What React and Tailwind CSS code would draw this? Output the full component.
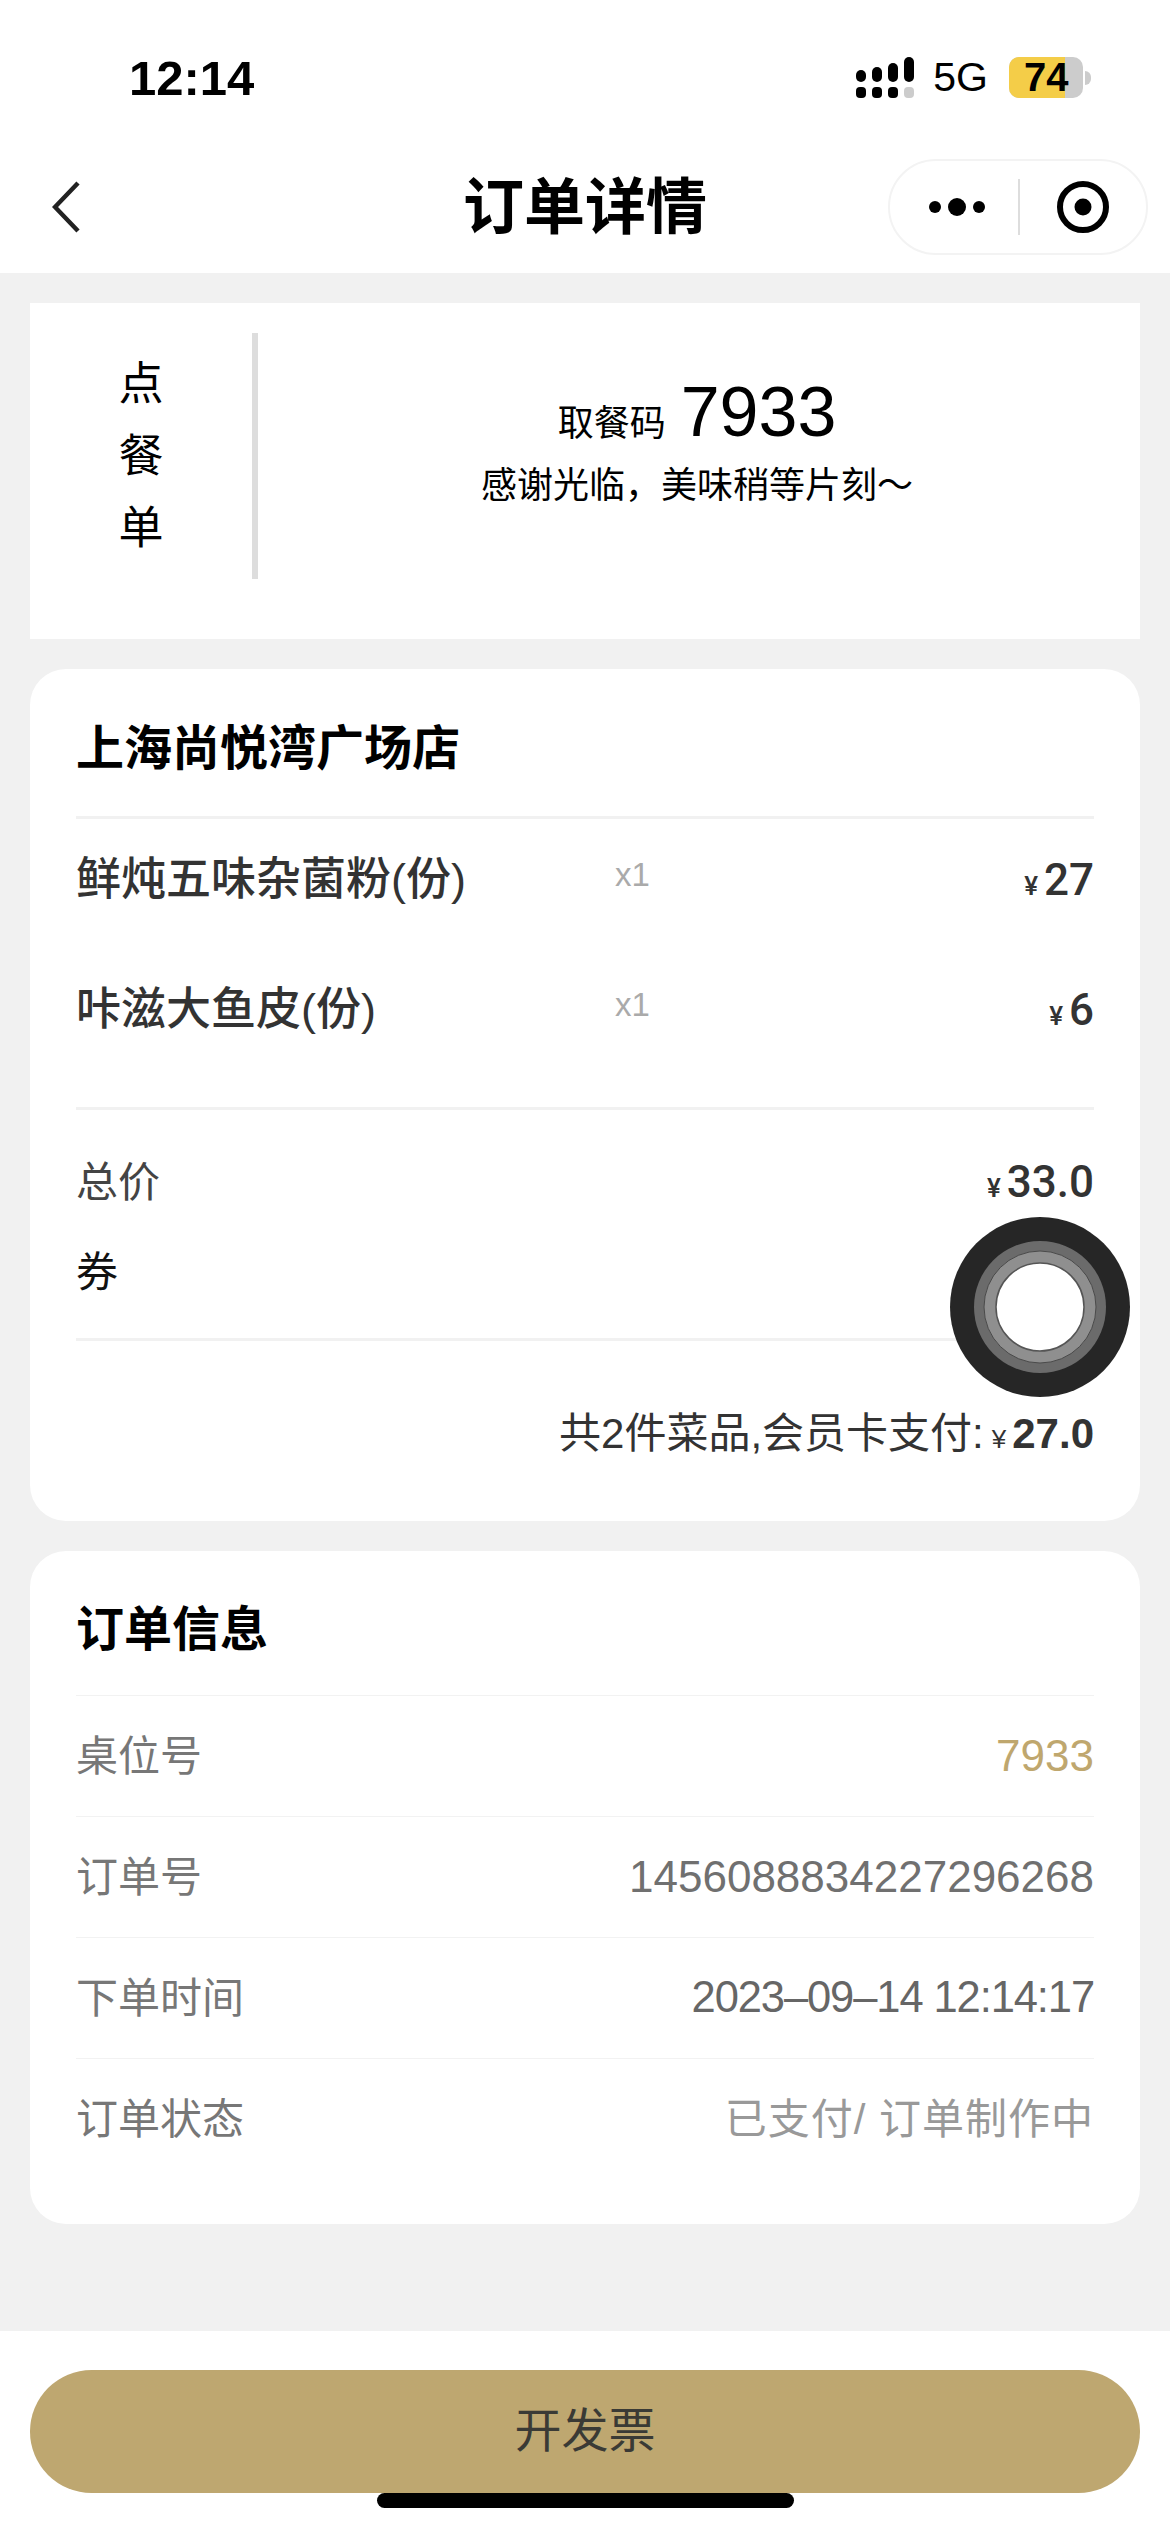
const sans = "font-['Liberation_Sans','Noto_Sans_CJK_SC',sans-serif]";

const Price = ({ value, bold }) => (
  <span className={`flex items-baseline gap-[6px] text-[#333] ${bold ? "font-bold text-[42px]" : "font-['Roboto',sans-serif] font-medium text-[44px]"}`}>
    <span className="text-[26px] font-medium">¥</span>
    <span>{value}</span>
  </span>
);

const StatusBar = () => (
  <div className="h-[140px] flex items-start pt-[50px] pl-[129px] pr-[79px] justify-between">
    <span className="text-[49px] leading-[56px] font-bold text-black">12:14</span>
    <div className="flex items-center gap-[19px] pt-[7px]">
      <svg width="58" height="41" viewBox="0 0 58 41">
        <rect x="0" y="13" width="10" height="12" rx="5" fill="#000" />
        <rect x="16" y="10" width="10" height="15" rx="5" fill="#000" />
        <rect x="32" y="6" width="10" height="19" rx="5" fill="#000" />
        <rect x="48" y="0" width="10" height="25" rx="5" fill="#000" />
        <rect x="0" y="30" width="10" height="11" rx="4" fill="#000" />
        <rect x="16" y="30" width="10" height="11" rx="4" fill="#000" />
        <rect x="32" y="30" width="10" height="11" rx="4" fill="#000" />
        <rect x="48" y="30" width="10" height="11" rx="4" fill="#ccc" />
      </svg>
      <span className="text-[41px] leading-[41px] text-black mr-[2px]">5G</span>
      <div className="flex items-center">
        <div className="relative w-[74px] h-[41px] rounded-[10px] bg-[#ccc]">
          <div className="w-[56px] h-full rounded-l-[10px] bg-[#f4cd48]" />
          <span className="absolute left-[15px] top-0 text-[40px] leading-[41px] font-bold text-black">74</span>
        </div>
        <div className="w-[6px] h-[14px] ml-[2px] rounded-r-full bg-[#ccc]" />
      </div>
    </div>
  </div>
);

const NavBar = () => (
  <div className="relative h-[133px] flex items-center justify-between pl-[52px] pr-[22px]">
    <svg width="28" height="52" viewBox="0 0 28 52">
      <path d="M26 2 L3 26 L26 50" fill="none" stroke="#222" strokeWidth="4.5" />
    </svg>
    <h1 className="absolute left-0 right-0 top-[2px] leading-[133px] text-center text-[61px] font-bold text-black pointer-events-none">订单详情</h1>
    <div className="w-[260px] h-[96px] rounded-full border-2 border-[#f3f3f3] flex items-center">
      <svg width="56" height="20" viewBox="0 0 56 20" className="ml-[39px]">
        <circle cx="6" cy="10" r="6" fill="#000" />
        <circle cx="28" cy="10" r="9" fill="#000" />
        <circle cx="50" cy="10" r="6" fill="#000" />
      </svg>
      <div className="w-[2px] h-[56px] bg-[#ddd] ml-[33px]" />
      <svg width="54" height="54" viewBox="0 0 54 54" className="ml-[36px]">
        <circle cx="27" cy="27" r="23" fill="none" stroke="#000" strokeWidth="6" />
        <circle cx="27" cy="27" r="8.5" fill="#000" />
      </svg>
    </div>
  </div>
);

const PickupCard = () => (
  <section className="h-[336px] bg-white flex pt-[30px]">
    <div className="w-[222px] h-[246px] pt-[2px] flex flex-col items-center justify-center text-[45px] leading-[72px] text-black">
      <span>点</span>
      <span>餐</span>
      <span>单</span>
    </div>
    <div className="w-[6px] h-[246px] bg-[#ddd]" />
    <div className="flex-1 flex flex-col items-center pt-[39px] pr-[4px] text-black">
      <div className="flex items-baseline gap-[15px]">
        <span className="text-[36px]">取餐码</span>
        <span className="text-[70px] leading-[80px]">7933</span>
      </div>
      <p className="text-[36px] leading-[50px] mt-[9px]">感谢光临，美味稍等片刻～</p>
    </div>
  </section>
);

const ItemRow = ({ name, price }) => (
  <div className="h-[122px] flex items-center">
    <span className="w-[539px] text-[45px] font-medium text-[#333]">{name}</span>
    <span className="text-[33px] text-[#aaa] -mt-[10px]">x1</span>
    <span className="ml-auto"><Price value={price} /></span>
  </div>
);

const OrderCard = () => (
  <section className="relative h-[852px] bg-white rounded-[36px] px-[46px]">
    <h2 className="h-[150px] pt-[46px] leading-[68px] text-[48px] font-bold text-black border-b-[3px] border-[#f1f1f1]">上海尚悦湾广场店</h2>
    <div className="h-[291px] flex flex-col gap-2 border-b-[3px] border-[#f1f1f1]">
      <ItemRow name="鲜炖五味杂菌粉(份)" price="27" />
      <ItemRow name="咔滋大鱼皮(份)" price="6" />
    </div>
    <div className="h-[231px] pt-[36px] border-b-[3px] border-[#f1f1f1] text-[42px]">
      <div className="h-[72px] flex items-center justify-between text-[#444]">
        <span>总价</span>
        <Price value="33.0" />
      </div>
      <div className="h-[72px] mt-[18px] flex items-center text-[#111]">券</div>
    </div>
    <div className="h-[180px] pt-[61px] flex justify-end items-start">
      <div className="flex items-baseline gap-[8px] text-[#333]">
        <span className="text-[42px]">共2件菜品,会员卡支付:</span>
        <Price value="27.0" bold />
      </div>
    </div>
  </section>
);

const InfoRow = ({ label, value, className }) => (
  <div className="h-[121px] flex items-center justify-between border-t border-[#f2f2f2] text-[42px] text-[#777]">
    <span>{label}</span>
    <span className={className}>{value}</span>
  </div>
);

const InfoCard = () => (
  <section className="h-[673px] bg-white rounded-[36px] px-[46px]">
    <h2 className="h-[144px] pt-[45px] leading-[68px] text-[48px] font-bold text-black">订单信息</h2>
    <InfoRow label="桌位号" value="7933" className="text-[44px] text-[#bfa76e]" />
    <InfoRow label="订单号" value="1456088834227296268" className="text-[44px] text-[#707070]" />
    <InfoRow label="下单时间" value="2023–09–14 12:14:17" className="text-[43.5px] tracking-[-1.1px] text-[#666]" />
    <InfoRow label="订单状态" value="已支付/ 订单制作中" className="text-[42px] tracking-[1px] text-[#999]" />
  </section>
);

// the floating assistive touch button from the phone
const AssistiveTouch = () => (
  <div className="absolute left-[950px] top-[1217px]">
    <svg width="180" height="180" viewBox="0 0 180 180">
      <circle cx="90" cy="90" r="90" fill="#262626" />
      <circle cx="90" cy="90" r="66" fill="#6b6b6b" />
      <circle cx="90" cy="90" r="56" fill="#8f8f8f" stroke="#4a4a4a" strokeWidth="1" />
      <circle cx="90" cy="90" r="44" fill="#fff" stroke="#555" strokeWidth="1.5" />
    </svg>
  </div>
);

export default function App() {
  return (
    <div className={`relative w-[1170px] h-[2532px] flex flex-col bg-[#f1f1f1] overflow-hidden ${sans}`}>
      <div className="bg-white h-[273px]">
        <StatusBar />
        <NavBar />
      </div>
      <main className="flex-1 flex flex-col gap-[30px] pt-[30px] px-[30px]">
        <PickupCard />
        <OrderCard />
        <InfoCard />
      </main>
      <footer className="h-[201px] bg-white px-[30px] pt-[39px]">
        <button className="w-full h-[123px] rounded-full bg-[#bea770] text-[47px] text-[#3a3a35]">开发票</button>
      </footer>
      <AssistiveTouch />
      <div className="absolute left-[377px] top-[2493px] w-[417px] h-[15px] rounded-full bg-black" />
    </div>
  );
}
